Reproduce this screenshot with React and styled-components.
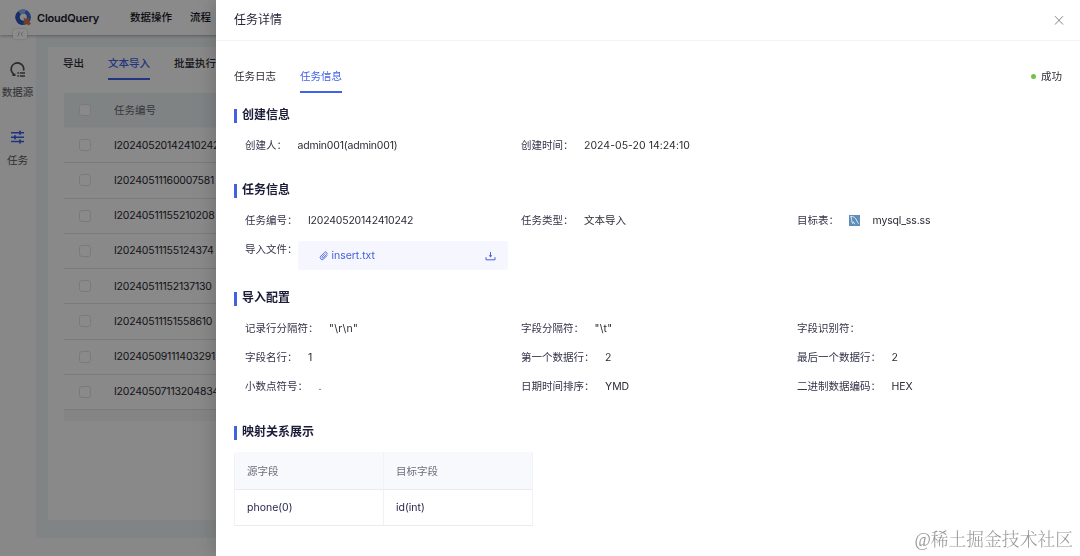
import React from 'react'
import styled, { createGlobalStyle } from 'styled-components'

const GlobalStyle = createGlobalStyle`
  * { box-sizing: border-box; }
  body {
    margin: 0;
    height: 556px;
    overflow: hidden;
    background: #fff;
    color: #2b2b33;
    font-family: Inter, "Noto Sans CJK SC", sans-serif;
    font-size: 10.5px;
    line-height: 16px;
  }
`

const Page = styled.div`
  width: 1080px;
  height: 556px;
  display: flex;
  flex-direction: column;
  background: #f7f8f8;
`

const TopBar = styled.header`
  position: relative;
  z-index: 1;
  height: 35px;
  flex: none;
  display: flex;
  align-items: center;
  padding-left: 15px;
  background: #fbfbfb;
  box-shadow: 0 1px 3px rgba(0, 0, 0, 0.3);
`

const Brand = styled.span`
  width: 93px;
  margin-left: 5px;
  color: #1c1c33;
  font-size: 11px;
  font-weight: 600;
  letter-spacing: -0.2px;
`

const NavItem = styled.a`
  margin-right: 18px;
  color: #17171f;
  font-weight: 500;
`

const Body = styled.div`
  flex: 1;
  display: flex;
  min-height: 0;
`

const SideBar = styled.aside`
  position: relative;
  width: 36px;
  flex: none;
  display: flex;
  flex-direction: column;
  align-items: center;
  padding-top: 26px;
`

const SideItem = styled.div`
  height: 68px;
  display: flex;
  flex-direction: column;
  align-items: center;
  gap: 6.5px;
  white-space: nowrap;
  color: #55565e;
  margin-left: -1px;
`

// sits on the seam between the top bar and the side bar
const FoldTag = styled.span`
  position: absolute;
  z-index: 2;
  top: -6px;
  left: 13px;
  width: 14px;
  height: 10px;
  display: flex;
  align-items: center;
  justify-content: center;
  border-radius: 2px;
  background: #fff;
  box-shadow: 0 0 2px rgba(0, 0, 0, 0.25);
`

const Content = styled.main`
  flex: 1;
  height: 503px;
  padding: 12px 0 18px 12px;
  background: #ebf0f1;
`

const Card = styled.div`
  height: 100%;
  padding: 4px 16px 0;
  background: #fafafa;
`

const Tabs = styled.div`
  display: flex;
  align-items: flex-start;
  gap: 24px;
`

const ListTabs = styled(Tabs)`
  height: 42px;
  margin-left: -1px;
`

const Tab = styled.span`
  padding: 5px 0 6px;
  border-bottom: 2px solid ${p => (p.$active ? '#4161e8' : 'transparent')};
  color: ${p => (p.$active ? '#4161e8' : '#2b2b33')};
  font-weight: ${p => p.$weight || 400};
  white-space: nowrap;
`

const TaskRow = styled.div`
  height: ${p => (p.$head ? 35 : 35.25)}px;
  display: flex;
  align-items: center;
  padding: 1px 0 0 16px;
  gap: 23px;
  border-bottom: 1px solid ${p => (p.$head ? '#eef2f6' : '#dedede')};
  background: ${p => (p.$head ? '#e9eef1' : 'transparent')};
  color: ${p => (p.$head ? '#62666f' : '#26262e')};
  letter-spacing: ${p => (p.$head ? 0 : -0.21)}px;
`

const Check = styled.i`
  width: 12px;
  height: 12px;
  flex: none;
  margin: -1px 0 0 -1px;
  border: 1px solid #dfdfe2;
  border-radius: 3px;
  background: #fbfbfb;
`

const ScrollStrip = styled.div`
  height: 11px;
  background: #f1f1f1;
`

const Mask = styled.div`
  position: fixed;
  inset: 0;
  z-index: 10;
  background: rgba(0, 0, 0, 0.45);
`

const Drawer = styled.section`
  position: fixed;
  top: 0;
  right: 0;
  bottom: 0;
  z-index: 11;
  width: 864px;
  background: #fff;
  box-shadow: -4px 0 12px rgba(0, 0, 0, 0.1), -8px 0 28px rgba(0, 0, 0, 0.06);
`

const DrawerHead = styled.div`
  height: 41px;
  display: flex;
  align-items: center;
  justify-content: space-between;
  padding: 0 16px 0 18px;
  border-bottom: 1px solid #f4f4f6;
  font-size: 12px;
  color: #26263a;
`

const DrawerBody = styled.div`
  padding: 23px 18px 0;
`

const TabLine = styled.div`
  display: flex;
  justify-content: space-between;
  height: 43px;
`

const Status = styled.span`
  display: flex;
  align-items: center;
  gap: 5.5px;
  height: 25px;
  &::before {
    content: '';
    width: 5px;
    height: 5px;
    border-radius: 50%;
    background: #6fc243;
  }
`

const Section = styled.div`
  height: ${p => p.$h}px;
`

const SectionTitle = styled.h3`
  display: flex;
  align-items: center;
  height: 16px;
  margin: 0 0 15px;
  color: #1c1c38;
  font-size: 12px;
  font-weight: 700;
  line-height: 16px;
  &::before {
    content: '';
    width: 3px;
    height: 14px;
    margin: 1px 5px 0 0;
    background: #4561e0;
  }
`

const Fields = styled.div`
  display: grid;
  grid-template-columns: repeat(3, 276px);
  row-gap: 13.2px;
  padding-left: 11px;
`

const Field = styled.div`
  display: flex;
  height: 16px;
`

const Label = styled.span`
  color: #33334a;
  margin-right: ${p => (p.$tight ? 0 : 10.5)}px;
`

const Value = styled.span`
  letter-spacing: ${p => p.$ls || 0}px;
  white-space: nowrap;
`

const FileBox = styled.div`
  display: flex;
  align-items: center;
  width: 210.5px;
  height: 29px;
  flex: none;
  margin-top: -1px;
  padding: 0 12.5px 0 21px;
  border-radius: 2px;
  background: #f6f7fe;
  color: #4561e0;
  span {
    flex: 1;
    margin-left: 4px;
    letter-spacing: -0.05px;
  }
`

const TableTarget = styled.span`
  display: flex;
  align-items: center;
  gap: 13px;
  svg {
    margin: -1px 0 0 -1px;
  }
`

const MapTable = styled.div`
  display: grid;
  grid-template-columns: 149px 148.5px;
  width: 298px;
  border-radius: 4px 4px 0 0;
  border-left: 1px solid #f1f2f5;
  margin-top: -3px;
`

const Cell = styled.div`
  height: ${p => (p.$head ? 37.5 : 36.5)}px;
  padding: ${p => (p.$head ? 11.5 : 10)}px 12px 0;
  border-right: 1px solid #f1f2f5;
  border-bottom: 1px solid #e9ebee;
  background: ${p => (p.$head ? '#f7f9fd' : '#fff')};
  color: ${p => (p.$head ? '#6b6f7b' : '#26264a')};
`

const Watermark = styled.div`
  position: fixed;
  z-index: 12;
  right: 7px;
  bottom: 4px;
  color: #9a9a9a;
  font: 300 17.8px/24px "Liberation Serif", "Noto Serif CJK SC", "Noto Sans CJK SC", serif;
`

const LogoIcon = () => (
  <svg width="17" height="17" viewBox="0 0 17 17" fill="none">
    <circle cx="8.2" cy="8.2" r="5.7" stroke="#3f6fe0" strokeWidth="4.2" />
    <path d="M8.2 13.9A5.7 5.7 0 0 1 4.6 3.8" stroke="#2f55b8" strokeWidth="4.2" />
    <path d="M4.6 3.8a5.7 5.7 0 0 1 5.6-.9" stroke="#86b0f0" strokeWidth="4.2" />
    <path d="M8.4 8.6l3.2 1.4 3.2-1.5-1.4 3.5 2.6 2.6-2.2 2-2.7-2.2-2.7 1.2 1.1-3.3z" fill="#dc7430" />
  </svg>
)

const SourceIcon = () => (
  <svg width="17" height="17" viewBox="0 0 17 17" fill="none" stroke="#4d4e57" strokeWidth="1.7">
    <path d="M3.4 14.1h3A6.3 6.3 0 1 1 14.6 9.6" />
    <path d="M8.3 12h1.6M10.8 12H16M8.3 15h1.6M10.8 15H16" strokeWidth="1.4" />
  </svg>
)

const TaskIcon = () => (
  <svg width="15" height="17" viewBox="0 0 15 17" fill="none" stroke="#3d5bea" strokeWidth="1.5">
    <path d="M1 3.8h13M1 8.2h13M1 12.6h13" />
    <path d="M10 1.8v4M5 6.2v4M10 10.6v4" strokeWidth="1.8" />
  </svg>
)

const ClipIcon = () => (
  <svg width="9" height="10" viewBox="0 0 9 10" fill="none" stroke="#4561e0" strokeWidth="0.9" strokeLinecap="round">
    <path d="M8 4.6L4.7 8a2 2 0 0 1-3-.1 2 2 0 0 1 .1-2.8l3.7-3.7a1.5 1.5 0 0 1 2.1 0 1.5 1.5 0 0 1 0 2.1L4.2 6.9a.8.8 0 0 1-1.1-1.1l3-3" />
  </svg>
)

const DownloadIcon = () => (
  <svg width="11" height="10" viewBox="0 0 11 10" fill="none" stroke="#4561e0" strokeWidth="1">
    <path d="M1 6.2v2.6h9V6.2M5.5 1v4" />
    <path d="M3.7 4.2h3.6L5.5 6.5z" fill="#4561e0" stroke="none" />
  </svg>
)

const MysqlIcon = () => (
  <svg width="11" height="11" viewBox="0 0 11 11" fill="none">
    <rect width="11" height="11" fill="#5f8fb8" />
    <path d="M1.6 1.4c3-.2 5.4 1.6 6.3 4.6.3 1.2 1 2 2.1 2.7M1.6 1.4c.8 1 .7 2 1 3.4.2 1 .2 2.5 1 3.7l.7-1.7 1.5 2.4" stroke="#e6f0f7" strokeWidth="0.9" />
  </svg>
)

const CloseIcon = () => (
  <svg width="10" height="10" viewBox="0 0 10 10" stroke="#85858a" strokeWidth="1">
    <path d="M1 1.200l8 8.300M9 1.200L1 9.500" />
  </svg>
)

const taskIds = [
  'I20240520142410242',
  'I20240511160007581',
  'I20240511155210208',
  'I20240511155124374',
  'I20240511152137130',
  'I20240511151558610',
  'I20240509111403291',
  'I20240507113204834',
]

const importConfig = [
  ['记录行分隔符', '"\\r\\n"', 0.3],
  ['字段分隔符', '"\\t"', 0.3],
  ['字段识别符', ''],
  ['字段名行', '1'],
  ['第一个数据行', '2'],
  ['最后一个数据行', '2'],
  ['小数点符号', '.'],
  ['日期时间排序', 'YMD'],
  ['二进制数据编码', 'HEX'],
]

const Item = ({ label, children, ls }) => (
  <Field>
    <Label>{label}：</Label>
    <Value $ls={ls}>{children}</Value>
  </Field>
)

function TaskPage() {
  return (
    <Page>
      <TopBar>
        <LogoIcon />
        <Brand>CloudQuery</Brand>
        <NavItem>数据操作</NavItem>
        <NavItem>流程</NavItem>
      </TopBar>
      <Body>
        <SideBar>
          <FoldTag>
            <svg width="7" height="6" viewBox="0 0 7 6" fill="none" stroke="#aaa" strokeWidth="0.8">
              <path d="M2.4.5L.8 5.5M6 .8L3.8 3 6 5.2" />
            </svg>
          </FoldTag>
          <SideItem><SourceIcon />数据源</SideItem>
          <SideItem><TaskIcon />任务</SideItem>
        </SideBar>
        <Content>
          <Card>
            <ListTabs>
              <Tab $weight={500}>导出</Tab>
              <Tab $weight={500} $active>文本导入</Tab>
              <Tab $weight={500}>批量执行</Tab>
            </ListTabs>
            <TaskRow $head><Check />任务编号</TaskRow>
            {taskIds.map(id => (
              <TaskRow key={id}><Check />{id}</TaskRow>
            ))}
            <ScrollStrip />
          </Card>
        </Content>
      </Body>
    </Page>
  )
}

function TaskDrawer() {
  return (
    <Drawer>
      <DrawerHead>
        任务详情
        <CloseIcon />
      </DrawerHead>
      <DrawerBody>
        <TabLine>
          <Tabs>
            <Tab>任务日志</Tab>
            <Tab $active>任务信息</Tab>
          </Tabs>
          <Status>成功</Status>
        </TabLine>

        <Section $h={75}>
          <SectionTitle>创建信息</SectionTitle>
          <Fields>
            <Item label="创建人" ls={-0.18}>admin001(admin001)</Item>
            <Item label="创建时间" ls={0.03}>2024-05-20 14:24:10</Item>
          </Fields>
        </Section>

        <Section $h={108}>
          <SectionTitle>任务信息</SectionTitle>
          <Fields>
            <Item label="任务编号" ls={-0.21}>I20240520142410242</Item>
            <Item label="任务类型">文本导入</Item>
            <Item label="目标表" ls={-0.15}>
              <TableTarget><MysqlIcon />mysql_ss.ss</TableTarget>
            </Item>
            <Field>
              <Label $tight>导入文件：</Label>
              <FileBox>
                <ClipIcon />
                <span>insert.txt</span>
                <DownloadIcon />
              </FileBox>
            </Field>
          </Fields>
        </Section>

        <Section $h={134}>
          <SectionTitle>导入配置</SectionTitle>
          <Fields>
            {importConfig.map(([label, value, ls]) => (
              <Item key={label} label={label} ls={ls}>{value}</Item>
            ))}
          </Fields>
        </Section>

        <SectionTitle>映射关系展示</SectionTitle>
        <MapTable>
          <Cell $head>源字段</Cell>
          <Cell $head>目标字段</Cell>
          <Cell>phone(0)</Cell>
          <Cell>id(int)</Cell>
        </MapTable>
      </DrawerBody>
    </Drawer>
  )
}

export default function App() {
  return (
    <>
      <GlobalStyle />
      <TaskPage />
      <Mask />
      <TaskDrawer />
      <Watermark>@稀土掘金技术社区</Watermark>
    </>
  )
}
